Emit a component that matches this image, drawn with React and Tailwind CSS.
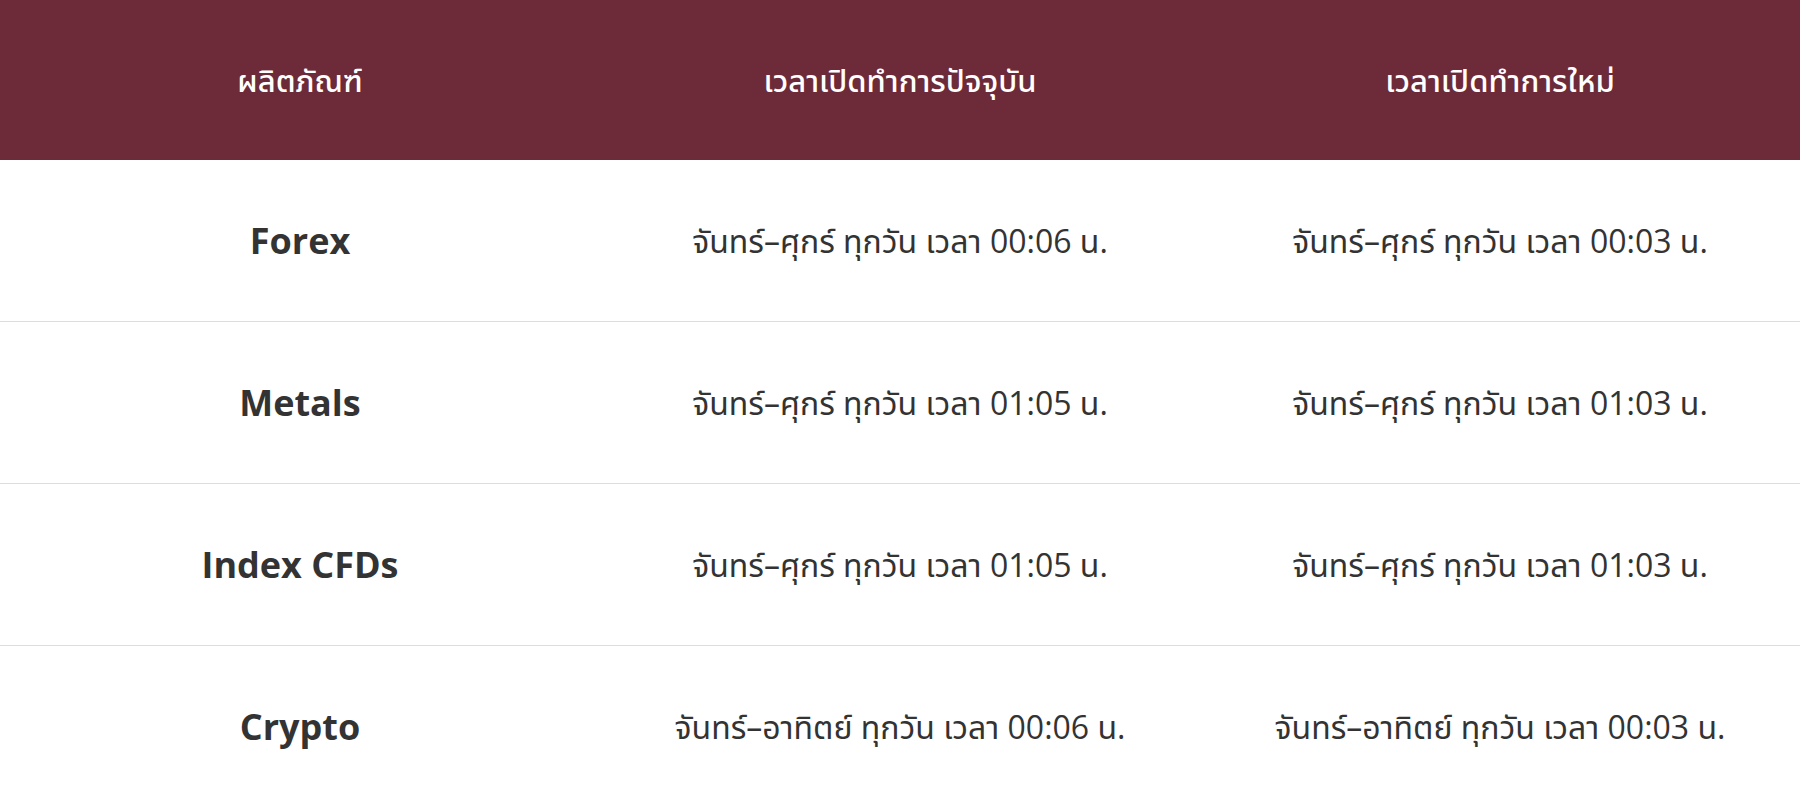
import React from "react";

const rows = [
  ["Forex", "จันทร์–ศุกร์ ทุกวัน เวลา 00:06 น.", "จันทร์–ศุกร์ ทุกวัน เวลา 00:03 น."],
  ["Metals", "จันทร์–ศุกร์ ทุกวัน เวลา 01:05 น.", "จันทร์–ศุกร์ ทุกวัน เวลา 01:03 น."],
  ["Index CFDs", "จันทร์–ศุกร์ ทุกวัน เวลา 01:05 น.", "จันทร์–ศุกร์ ทุกวัน เวลา 01:03 น."],
  ["Crypto", "จันทร์–อาทิตย์ ทุกวัน เวลา 00:06 น.", "จันทร์–อาทิตย์ ทุกวัน เวลา 00:03 น."],
];

export default function App() {
  return (
    <div className="w-full bg-white font-['Open_Sans','Noto_Sans_Thai','Noto_Sans_Thai_UI','Noto_Sans',sans-serif] text-[#333333]">
      <div className="grid grid-cols-3 h-[160px] bg-[#6d2a38] items-center text-white text-[31px] font-medium">
        <div className="text-center">ผลิตภัณฑ์</div>
        <div className="text-center">เวลาเปิดทำการปัจจุบัน</div>
        <div className="text-center">เวลาเปิดทำการใหม่</div>
      </div>
      {rows.map((r, i) => (
        <div
          key={i}
          className={`grid grid-cols-3 h-[162px] items-center ${i < rows.length - 1 ? "border-b border-[#dddddd]" : ""}`}
        >
          <div className="text-center font-bold text-[36px]">{r[0]}</div>
          <div className="text-center text-[32px]">{r[1]}</div>
          <div className="text-center text-[32px]">{r[2]}</div>
        </div>
      ))}
    </div>
  );
}
